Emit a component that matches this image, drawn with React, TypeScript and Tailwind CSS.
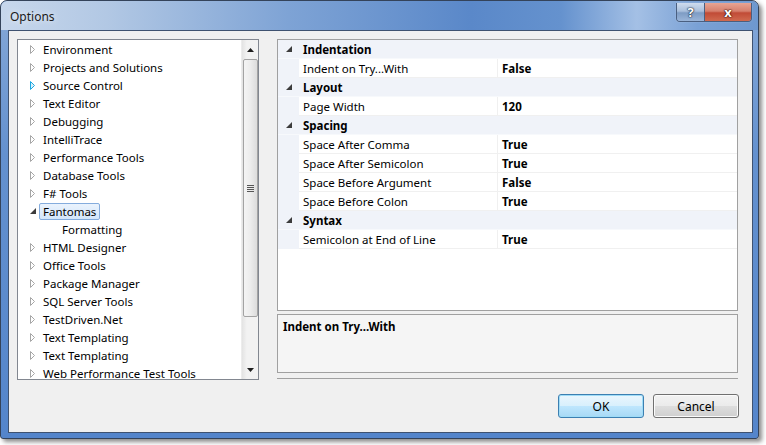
import React from "react";

const treeItems: { t: string; hover?: boolean; expanded?: boolean; selected?: boolean; child?: boolean }[] = [
  { t: "Environment" },
  { t: "Projects and Solutions" },
  { t: "Source Control", hover: true },
  { t: "Text Editor" },
  { t: "Debugging" },
  { t: "IntelliTrace" },
  { t: "Performance Tools" },
  { t: "Database Tools" },
  { t: "F# Tools" },
  { t: "Fantomas", expanded: true, selected: true },
  { t: "Formatting", child: true },
  { t: "HTML Designer" },
  { t: "Office Tools" },
  { t: "Package Manager" },
  { t: "SQL Server Tools" },
  { t: "TestDriven.Net" },
  { t: "Text Templating" },
  { t: "Text Templating" },
  { t: "Web Performance Test Tools" },
];

type Row = { cat?: string; label?: string; value?: string };
const rows: Row[] = [
  { cat: "Indentation" },
  { label: "Indent on Try...With", value: "False" },
  { cat: "Layout" },
  { label: "Page Width", value: "120" },
  { cat: "Spacing" },
  { label: "Space After Comma", value: "True" },
  { label: "Space After Semicolon", value: "True" },
  { label: "Space Before Argument", value: "False" },
  { label: "Space Before Colon", value: "True" },
  { cat: "Syntax" },
  { label: "Semicolon at End of Line", value: "True" },
];

function HollowArrow({ hover }: { hover?: boolean }) {
  return (
    <svg width="6" height="9" viewBox="0 0 6 9">
      <path
        d="M0.5 0.5 L4.5 4.5 L0.5 8.5 Z"
        fill={hover ? "#d8f0fb" : "#ffffff"}
        stroke={hover ? "#1ca7e0" : "#a6a6a6"}
        strokeWidth="1"
      />
    </svg>
  );
}

function FilledArrow() {
  return (
    <svg width="6" height="6" viewBox="0 0 6 6">
      <path d="M6 0 L6 6 L0 6 Z" fill="#3c3c3c" />
    </svg>
  );
}

export default function App() {
  return (
    <div className="w-[766px] h-[445px] bg-white font-['Noto_Sans',sans-serif] text-[11.5px] text-black leading-none">
      <div className="w-[759px] h-[439px] rounded-t-[7px] rounded-b-[3px] border border-[#34435a] bg-[linear-gradient(180deg,#86a9d8_0%,#6491cf_35%,#5485cb_100%)] shadow-[3px_3px_4px_rgba(0,0,0,0.45)] flex flex-col overflow-hidden">
        {/* title bar */}
        <div className="h-[29px] shrink-0 flex items-start rounded-t-[6px] bg-[linear-gradient(90deg,#c7d7ec_0%,#b2c8e4_14%,#7ea3d5_38%,#5a88c9_62%,#6592ce_74%,#a4c0e5_84%,#7aa1d5_92%,#6e98cf_100%)]">
          <div className="pl-[9px] pt-[10px] text-[12px] text-[#1a1a1a] [text-shadow:0_0_6px_rgba(255,255,255,0.9)]">Options</div>
          <div className="ml-auto mr-[6px] mt-[2px] flex border border-[#4a5f80] border-t-0 rounded-b-[4px] overflow-hidden shadow-[0_0_1px_rgba(255,255,255,0.7)]">
            <div className="w-[28px] h-[18px] flex items-center justify-center border-r border-[#4a5f80] bg-[linear-gradient(180deg,#cfdcee_0%,#a9bfdc_45%,#7e9cc4_55%,#9ab5d9_100%)]">
              <span className="text-white font-bold text-[13px] [text-shadow:0_0_1px_#1c2a3f,0_0_1px_#1c2a3f,0_0_2px_#1c2a3f]">?</span>
            </div>
            <div className="w-[46px] h-[18px] flex items-center justify-center bg-[linear-gradient(180deg,#e8a493_0%,#d6806d_45%,#c14b36_55%,#d06a4f_100%)]">
              <span className="text-white font-bold text-[13px] [text-shadow:0_0_1px_#3b0f08,0_0_1px_#3b0f08,0_0_2px_#3b0f08]">x</span>
            </div>
          </div>
        </div>
        {/* client */}
        <div className="ml-[7px] mr-[5px] mb-[5px] flex-1 border border-[#3f5270] bg-[#f0f0f0] flex flex-col">
          <div className="flex pt-[8px] pl-[8px]">
            {/* tree */}
            <div className="w-[242px] h-[341px] border border-[#828790] bg-white flex">
              <div className="flex-1 overflow-hidden">
                {treeItems.map((it, i) => (
                  <div key={i} className="h-[18px] flex items-center">
                    <div className={`${it.child ? "w-[40px]" : "w-[21px]"} h-[18px] shrink-0 flex items-center pl-[12px]`}>
                      {!it.child && (it.expanded ? <FilledArrow /> : <HollowArrow hover={it.hover} />)}
                    </div>
                    <span
                      className={`h-[17px] flex items-center pt-[2px] px-[3px] border rounded-[2px] whitespace-nowrap ${
                        it.selected
                          ? "border-[#84acdd] bg-[linear-gradient(180deg,#eaf3fd_0%,#d3e6fa_100%)]"
                          : "border-transparent"
                      }`}
                    >
                      {it.t}
                    </span>
                  </div>
                ))}
              </div>
              {/* scrollbar */}
              <div className="w-[17px] h-full bg-[linear-gradient(90deg,#e3e3e3_0%,#f2f2f2_30%,#f2f2f2_100%)] border-l border-[#ececec] flex flex-col items-center">
                <div className="h-[19px] w-full flex items-center justify-center">
                  <svg width="7" height="4" viewBox="0 0 7 4">
                    <path d="M3.5 0 L7 4 L0 4 Z" fill="#1e1e1e" />
                  </svg>
                </div>
                <div className="w-[15px] h-[258px] rounded-[2px] border border-[#a3a3a3] bg-[linear-gradient(90deg,#f4f4f4_0%,#ececec_50%,#dcdcdc_100%)] flex flex-col items-center justify-center gap-[1px]">
                  <div className="w-[7px] h-[1px] bg-[#555]" />
                  <div className="w-[7px] h-[1px] bg-[#555]" />
                  <div className="w-[7px] h-[1px] bg-[#555]" />
                  <div className="w-[7px] h-[1px] bg-[#555]" />
                </div>
                <div className="flex-1" />
                <div className="h-[19px] w-full flex items-center justify-center">
                  <svg width="7" height="4" viewBox="0 0 7 4">
                    <path d="M0 0 L7 0 L3.5 4 Z" fill="#1e1e1e" />
                  </svg>
                </div>
              </div>
            </div>
            {/* right column */}
            <div className="ml-[18px] w-[461px] flex flex-col">
              <div className="h-[272px] border border-[#a0a0a0] bg-white">
                {rows.map((r, i) =>
                  r.cat ? (
                    <div key={i} className="h-[19px] flex items-center bg-[#f0f3f9] border-b border-[#f7f9fc]">
                      <div className="w-[21px] h-full flex items-center justify-center pl-[1px]">
                        <FilledArrow />
                      </div>
                      <div className="pl-[4px] pt-[2px] font-bold">{r.cat}</div>
                    </div>
                  ) : (
                    <div key={i} className="h-[19px] flex">
                      <div className="w-[21px] h-full bg-[#f0f3f9]" />
                      <div className="w-[199px] h-full flex items-center pl-[4px] pt-[2px] border-b border-r border-[#f0f0f0]">{r.label}</div>
                      <div className="flex-1 h-full flex items-center pl-[4px] pt-[2px] border-b border-[#f0f0f0] font-bold">{r.value}</div>
                    </div>
                  )
                )}
              </div>
              <div className="mt-[3px] h-[59px] border border-[#a0a0a0] bg-[#f5f5f5] px-[5px] pt-[6px] font-bold">
                Indent on Try...With
              </div>
              <div className="mt-[5px] h-[1px] bg-[#a0a0a0]" />
            </div>
          </div>
          <div className="flex justify-end gap-[9px] pr-[13px] mt-[14px]">
            <button className="w-[86px] h-[24px] rounded-[3px] border border-[#3c7fb1] shadow-[inset_0_0_0_1px_#9fdcf7] bg-[linear-gradient(180deg,#eaf6fd_0%,#d9f0fc_48%,#bee6fd_52%,#a7d9f5_100%)] text-[12px] flex items-center justify-center pt-[1px]">
              OK
            </button>
            <button className="w-[86px] h-[24px] rounded-[3px] border border-[#707070] shadow-[inset_0_0_0_1px_#fbfbfb] bg-[linear-gradient(180deg,#f2f2f2_0%,#ebebeb_48%,#dddddd_52%,#cfcfcf_100%)] text-[12px] flex items-center justify-center pt-[1px]">
              Cancel
            </button>
          </div>
        </div>
      </div>
    </div>
  );
}
